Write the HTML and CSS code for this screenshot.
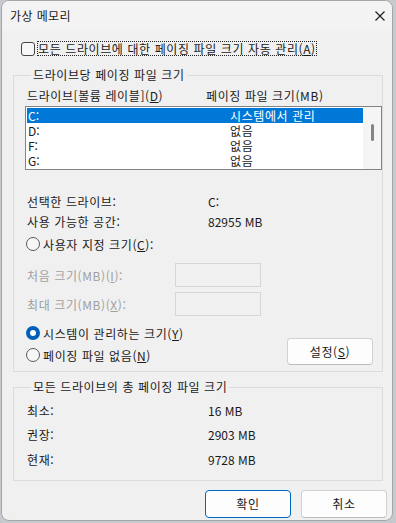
FILE: index.html
```html
<!DOCTYPE html>
<html lang="ko">
<head>
  <meta charset="UTF-8" />
  <title>가상 메모리</title>
  <link rel="stylesheet" href="styles.css">
</head>
<body>
  <div class="window">
    <div class="titlebar">
      <span class="title">가상 메모리</span>
      <span class="close">
        <svg width="10" height="10" viewBox="0 0 10 10"><path d="M0.5 0.5 L9.5 9.5 M9.5 0.5 L0.5 9.5" stroke="#1a1a1a" stroke-width="1.1" fill="none"/></svg>
      </span>
    </div>

    <div class="content">
      <label class="auto-row">
        <span class="checkbox"></span>
        <span class="focus-label">모든 드라이브에 대한 페이징 파일 크기 자동 관리(<u>A</u>)</span>
      </label>

      <fieldset class="group drive-group">
        <legend>드라이브당 페이징 파일 크기</legend>
        <div class="list-head">
          <span class="col-drive">드라이브[볼륨 레이블](<u>D</u>)</span>
          <span>페이징 파일 크기(MB)</span>
        </div>
        <div class="listbox">
          <div class="rows">
            <div class="row selected"><span class="col-drive num">C:</span><span>시스템에서 관리</span></div>
            <div class="row"><span class="col-drive num">D:</span><span>없음</span></div>
            <div class="row"><span class="col-drive num">F:</span><span>없음</span></div>
            <div class="row"><span class="col-drive num">G:</span><span>없음</span></div>
          </div>
          <div class="scrollbar"><div class="thumb"></div></div>
        </div>

        <div class="info">
          <span>선택한 드라이브:</span><span class="num">C:</span>
          <span>사용 가능한 공간:</span><span class="num">82955 MB</span>
        </div>

        <div class="radio-row custom">
          <span class="radio"></span>
          <span>사용자 지정 크기(<u>C</u>):</span>
        </div>

        <div class="size-fields">
          <span class="disabled">처음 크기(MB)(<u>I</u>):</span><span class="textbox"></span>
          <span class="disabled">최대 크기(MB)(<u>X</u>):</span><span class="textbox"></span>
        </div>

        <div class="bottom-row">
          <div class="radio-list">
            <div class="radio-row">
              <span class="radio checked"></span>
              <span>시스템이 관리하는 크기(<u>Y</u>)</span>
            </div>
            <div class="radio-row">
              <span class="radio"></span>
              <span>페이징 파일 없음(<u>N</u>)</span>
            </div>
          </div>
          <button class="btn set-btn">설정(<u>S</u>)</button>
        </div>
      </fieldset>

      <fieldset class="group total-group">
        <legend>모든 드라이브의 총 페이징 파일 크기</legend>
        <div class="totals">
          <span>최소:</span><span class="num">16 MB</span>
          <span>권장:</span><span class="num">2903 MB</span>
          <span>현재:</span><span class="num">9728 MB</span>
        </div>
      </fieldset>

      <div class="actions">
        <button class="btn default">확인</button>
        <button class="btn">취소</button>
      </div>
    </div>
  </div>
</body>
</html>
```

FILE: styles.css
```css
body {
  margin: 0;
  background: #c6cacf;
  font-family: "Noto Sans CJK KR", "Noto Sans", sans-serif;
  font-size: 12px;
  letter-spacing: 0.6px;
  color: #1a1a1a;
}

.num {
  letter-spacing: 0;
}

u {
  text-decoration: underline;
  text-underline-offset: 1px;
}

.window {
  box-sizing: border-box;
  margin-left: 1px;
  width: 392px;
  height: 521px;
  border: 1px solid #a6a6a6;
  border-radius: 8px;
  background: #f0f0f0;
  overflow: hidden;
}

.titlebar {
  height: 30px;
  background: #f3f3f3;
  display: flex;
  align-items: center;
  justify-content: space-between;
  padding: 0 7px 0 8px;
  line-height: 16px;
  letter-spacing: 0.4px;
}

.close {
  display: flex;
}

.content {
  padding: 0 9px 0 11px;
}

.auto-row {
  display: flex;
  align-items: center;
  gap: 2px;
  margin: 10px 0 0 8px;
  height: 15px;
}

.checkbox {
  box-sizing: border-box;
  width: 14px;
  height: 14px;
  border: 1px solid #444;
  border-radius: 3px;
  background: #f7f7f7;
}

.focus-label {
  border: 1px dotted #222;
  line-height: 13px;
  padding: 0;
}

.group {
  margin: 0;
  padding: 0 9px 0 11px;
  border: 1px solid #dcdcdc;
  border-radius: 0;
}

.group legend {
  margin-left: 6px;
  padding: 0 2px;
  line-height: 16px;
}

.drive-group {
  margin-top: 11px;
  padding-bottom: 5px;
}

.list-head {
  display: flex;
  margin-top: 5px;
  padding-left: 2px;
  line-height: 16px;
}

.col-drive {
  width: 179px;
  flex-shrink: 0;
}

.listbox {
  box-sizing: border-box;
  display: flex;
  height: 64px;
  margin: 2px -9px 0 0;
  border: 1px solid #838383;
  background: #fff;
  padding: 1px 0 1px 1px;
}

.rows {
  flex: 1;
}

.row {
  display: flex;
  height: 15px;
  line-height: 15px;
  padding-left: 1px;
}

.row .col-drive {
  width: 202px;
}

.row.selected {
  background: #0078d7;
  color: #fff;
}

.scrollbar {
  width: 18px;
  margin: -1px 0;
  background: #f5f5f5;
  position: relative;
}

.thumb {
  position: absolute;
  left: 8px;
  top: 17px;
  width: 3px;
  height: 17px;
  border-radius: 2px;
  background: #858585;
}

.info {
  display: grid;
  grid-template-columns: 181px auto;
  grid-auto-rows: 20px;
  align-items: center;
  margin-top: 21px;
  padding-left: 2px;
}

.radio-row {
  display: flex;
  align-items: center;
  gap: 3px;
  height: 22px;
  padding-left: 1px;
}

.custom {
  height: 20px;
  margin-top: 3px;
}

.radio {
  box-sizing: border-box;
  width: 14px;
  height: 14px;
  border: 1px solid #5a5a5a;
  border-radius: 50%;
  background: #f7f7f7;
}

.radio.checked {
  border: 4px solid #005fb8;
  background: #fff;
}

.size-fields {
  display: grid;
  grid-template-columns: 148px 86px;
  grid-auto-rows: 24px;
  row-gap: 5px;
  align-items: center;
  margin-top: 9px;
  padding-left: 2px;
}

.disabled {
  color: #a0a0a0;
}

.textbox {
  box-sizing: border-box;
  height: 24px;
  border: 1px solid #d6d6d6;
  background: #f0f0f0;
}

.bottom-row {
  display: flex;
  justify-content: space-between;
  align-items: flex-start;
  margin-top: 6px;
}

.btn {
  box-sizing: border-box;
  width: 86px;
  height: 28px;
  border: 1px solid #d0d0d0;
  border-bottom-color: #bcbcbc;
  border-radius: 4px;
  background: #fdfdfd;
  font-family: inherit;
  font-size: 12px;
  letter-spacing: 0.6px;
  color: #1a1a1a;
  padding: 0;
}

.set-btn {
  width: 86px;
  height: 27px;
  margin-top: 16px;
}

.total-group {
  margin-top: 7px;
  padding-bottom: 8px;
}

.totals {
  display: grid;
  grid-template-columns: 181px auto;
  grid-auto-rows: 24.5px;
  align-items: center;
  margin-top: 3px;
  padding-left: 2px;
}

.actions {
  display: flex;
  justify-content: flex-end;
  gap: 10px;
  margin: 9px -4px 0 0;
}

.btn.default {
  border: 1px solid #0067c0;
}
```
